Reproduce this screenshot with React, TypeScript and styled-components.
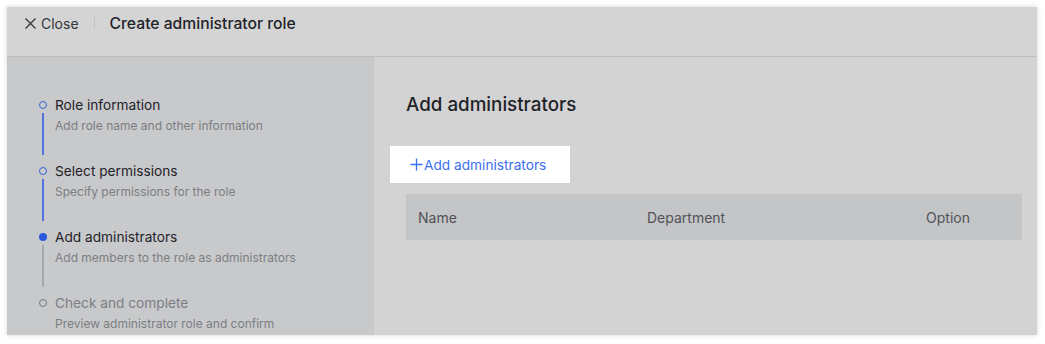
import React from "react";
import styled, { createGlobalStyle } from "styled-components";

const Global = createGlobalStyle`
  html, body { margin: 0; padding: 0; background: #ffffff; }
  body { font-family: Inter, "Noto Sans", "Liberation Sans", sans-serif; -webkit-font-smoothing: antialiased; }
  * { box-sizing: border-box; }
`;

const Page = styled.div`
  width: 1045px;
  height: 344px;
  padding: 7px 8px 9px 7px;
`;

const Window = styled.div`
  width: 1030px;
  height: 328px;
  background: #d3d3d3;
  box-shadow: 0 0 5px rgba(0, 0, 0, 0.16);
  display: flex;
  flex-direction: column;
  overflow: hidden;
`;

const Header = styled.div`
  height: 50px;
  flex-shrink: 0;
  display: flex;
  align-items: flex-start;
  padding: 0 0 0 17px;
  background: #d4d4d4;
  border-bottom: 1px solid #bdbdbd;
`;

const CloseBtn = styled.div`
  display: flex;
  align-items: center;
  gap: 4px;
  font-size: 14px;
  color: #333538;
  height: 18px;
  margin-top: 7px;
`;

const Divider = styled.div`
  width: 1px;
  height: 12px;
  background: #bfc0c2;
  margin: 10px 15px 0 15px;
`;

const Title = styled.div`
  font-size: 15.7px;
  line-height: 20px;
  font-weight: 500;
  color: #1f2329;
  margin-top: 6.5px;
`;

const Body = styled.div`
  flex: 1;
  display: flex;
`;

const Sidebar = styled.div`
  width: 367px;
  background: #c8c9cb;
  padding: 39px 0 0 32px;
  display: flex;
  flex-direction: column;
`;

const Step = styled.div`
  display: grid;
  grid-template-columns: 8px 1fr;
  column-gap: 8px;
  height: 66px;
`;

const Rail = styled.div`
  display: flex;
  flex-direction: column;
  align-items: center;
`;

const Dot = styled.div<{ $state: "done" | "active" | "todo" }>`
  width: 8px;
  height: 8px;
  border-radius: 50%;
  margin-top: 5px;
  flex-shrink: 0;
  ${({ $state }) =>
    $state === "active"
      ? "background: #2b56e0;"
      : $state === "done"
      ? "border: 1.5px solid #3a63d8; background: transparent;"
      : "border: 1.5px solid #77797d; background: transparent;"}
`;

const Line = styled.div<{ $color: string }>`
  width: 2px;
  height: 42px;
  margin-top: 4px;
  background: ${({ $color }) => $color};
`;

const StepText = styled.div`
  display: flex;
  flex-direction: column;
`;

const StepTitle = styled.div<{ $muted?: boolean }>`
  font-size: 13.7px;
  line-height: 18px;
  color: ${({ $muted }) => ($muted ? "#7c7e82" : "#1f2329")};
`;

const StepDesc = styled.div`
  font-size: 12px;
  line-height: 16px;
  margin-top: 4px;
  color: #7c7e82;
`;

const Main = styled.div`
  flex: 1;
  padding: 36px 15px 0 16px;
  display: flex;
  flex-direction: column;
`;

const SectionTitle = styled.div`
  font-size: 18.8px;
  font-weight: 500;
  color: #1f2329;
  line-height: 24px;
  padding-left: 16px;
`;

const AddButton = styled.div`
  align-self: flex-start;
  background: #ffffff;
  width: 180px;
  height: 37px;
  margin-top: 29px;
  display: flex;
  align-items: center;
  padding-left: 20px;
  font-size: 13.7px;
  color: #3a6ff0;
  gap: 1px;
`;

const Table = styled.div`
  margin: 11px 0 0 16px;
  height: 46px;
  background: #c4c5c7;
  display: grid;
  grid-template-columns: 229px 1fr auto;
  align-items: center;
  padding: 0 52px 0 12px;
  font-size: 14px;
  color: #505257;
`;

const steps: { title: string; desc: string; state: "done" | "active" | "todo"; line?: string }[] = [
  { title: "Role information", desc: "Add role name and other information", state: "done", line: "#4f73d8" },
  { title: "Select permissions", desc: "Specify permissions for the role", state: "done", line: "#4f73d8" },
  { title: "Add administrators", desc: "Add members to the role as administrators", state: "active", line: "#a7a8ab" },
  { title: "Check and complete", desc: "Preview administrator role and confirm", state: "todo" },
];

export default function App() {
  return (
    <>
      <Global />
      <Page>
        <Window>
          <Header>
            <CloseBtn>
              <svg width="13" height="13" viewBox="0 0 13 13">
                <path d="M1.5 1.5 L11.5 11.5 M11.5 1.5 L1.5 11.5" stroke="#333538" strokeWidth="1.3" fill="none" />
              </svg>
              Close
            </CloseBtn>
            <Divider />
            <Title>Create administrator role</Title>
          </Header>
          <Body>
            <Sidebar>
              {steps.map((s) => (
                <Step key={s.title}>
                  <Rail>
                    <Dot $state={s.state} />
                    {s.line && <Line $color={s.line} />}
                  </Rail>
                  <StepText>
                    <StepTitle $muted={s.state === "todo"}>{s.title}</StepTitle>
                    <StepDesc>{s.desc}</StepDesc>
                  </StepText>
                </Step>
              ))}
            </Sidebar>
            <Main>
              <SectionTitle>Add administrators</SectionTitle>
              <AddButton>
                <svg width="13" height="13" viewBox="0 0 13 13">
                  <path d="M6.5 0.5 V12.5 M0.5 6.5 H12.5" stroke="#3a6ff0" strokeWidth="1.3" fill="none" />
                </svg>
                Add administrators
              </AddButton>
              <Table>
                <span>Name</span>
                <span>Department</span>
                <span>Option</span>
              </Table>
            </Main>
          </Body>
        </Window>
      </Page>
    </>
  );
}
